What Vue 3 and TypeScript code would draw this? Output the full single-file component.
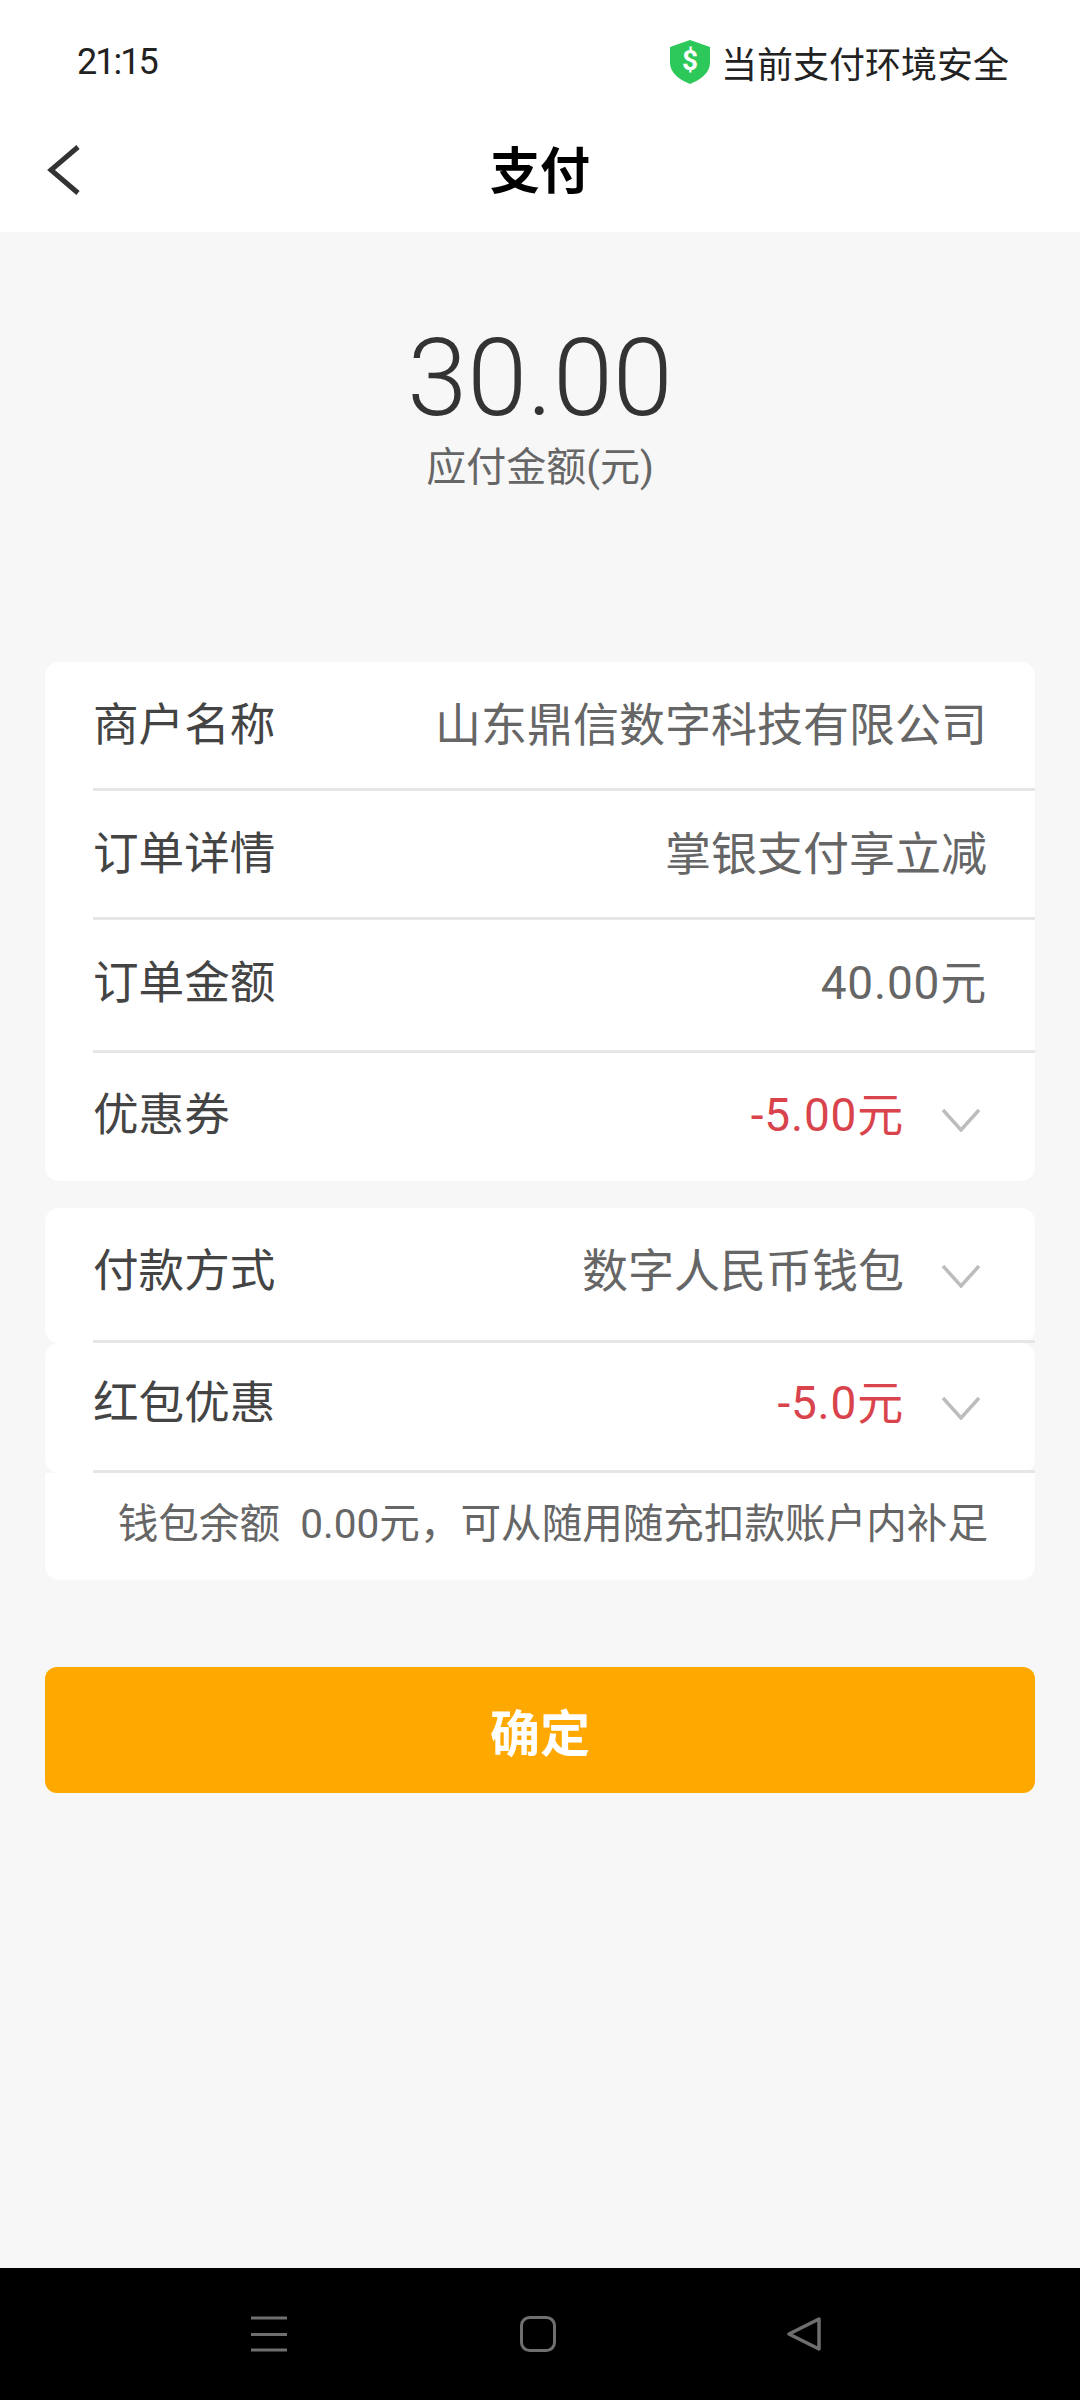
<template>
  <div class="page">
    <header class="top">
      <div class="status-bar">
        <span class="time">21:15</span>
        <div class="safe">
          <svg class="shield" viewBox="0 0 40 44">
            <path d="M20 0 L40 7 V23 C40 33 30 40 20 44 C10 40 0 33 0 23 V7 Z" fill="#2dc85a" />
            <text x="20" y="30" text-anchor="middle" class="shield-mark">$</text>
          </svg>
          <span>当前支付环境安全</span>
        </div>
      </div>
      <div class="title-bar">
        <svg class="back" viewBox="0 0 34 50">
          <path d="M31 2 L4 25 L31 48" fill="none" stroke="#333" stroke-width="5" />
        </svg>
        <span class="title">支付</span>
      </div>
    </header>

    <main class="content">
      <section class="amount">
        <div class="amount-num">30.00</div>
        <div class="amount-label">应付金额(元)</div>
      </section>

      <section class="card">
        <div v-for="row in orderRows" :key="row.label" class="row order-row" :class="{ last: row.last }">
          <span class="row-label">{{ row.label }}</span>
          <span class="row-value" :class="{ red: row.red, num: row.num }">{{ row.value }}</span>
          <svg v-if="row.arrow" class="arrow" viewBox="0 0 40 24">
            <path d="M2 2 L20 22 L38 2" fill="none" stroke="#bdbdbd" stroke-width="3.500" />
          </svg>
        </div>
      </section>

      <section class="pay-group">
        <div class="pay-block">
          <div class="row pay-row">
            <span class="row-label">付款方式</span>
            <span class="row-value">数字人民币钱包</span>
            <svg class="arrow" viewBox="0 0 40 24">
              <path d="M2 2 L20 22 L38 2" fill="none" stroke="#bdbdbd" stroke-width="3.500" />
            </svg>
          </div>
        </div>
        <div class="pay-block">
          <div class="row pay-row second">
            <span class="row-label">红包优惠</span>
            <span class="row-value red num">-5.0元</span>
            <svg class="arrow" viewBox="0 0 40 24">
              <path d="M2 2 L20 22 L38 2" fill="none" stroke="#bdbdbd" stroke-width="3.500" />
            </svg>
          </div>
        </div>
        <div class="note">钱包余额&nbsp;&nbsp;0.00元，可从随用随充扣款账户内补足</div>
      </section>

      <button class="confirm">确定</button>
    </main>

    <footer class="nav-bar">
      <svg class="nav-icon" viewBox="0 0 36 36">
        <path d="M0 2 H36 M0 18.500 H36 M0 34 H36" stroke="#6f6f6f" stroke-width="3" />
      </svg>
      <svg class="nav-icon" viewBox="0 0 36 36">
        <rect x="1.500" y="1.500" width="33" height="33" rx="8" fill="none" stroke="#6f6f6f" stroke-width="3" />
      </svg>
      <svg class="nav-icon" viewBox="0 0 36 36">
        <path d="M32 3 V33 L2 18 Z" fill="none" stroke="#6f6f6f" stroke-width="3.500" stroke-linejoin="round" />
      </svg>
    </footer>
  </div>
</template>

<script setup lang="ts">
interface OrderRow {
  label: string
  value: string
  red?: boolean
  num?: boolean
  arrow?: boolean
  last?: boolean
}

const orderRows: OrderRow[] = [
  { label: '商户名称', value: '山东鼎信数字科技有限公司' },
  { label: '订单详情', value: '掌银支付享立减' },
  { label: '订单金额', value: '40.00元', num: true },
  { label: '优惠券', value: '-5.00元', red: true, num: true, arrow: true, last: true }
]
</script>

<style>
html,
body {
  margin: 0;
  background: #f7f7f7;
}
</style>

<style scoped>
.page {
  width: 1080px;
  height: 2400px;
  display: flex;
  flex-direction: column;
  background: #f7f7f7;
  font-family: Roboto, "Noto Sans CJK SC", sans-serif;
  overflow: hidden;
}

.top {
  background: #fff;
}

.status-bar {
  height: 124px;
  box-sizing: border-box;
  padding: 0 71px 0 77px;
  display: flex;
  align-items: center;
  justify-content: space-between;
  font-size: 36px;
  color: #222;
}

.time {
  letter-spacing: -2px;
}

.safe {
  display: flex;
  align-items: center;
  gap: 11px;
}

.shield {
  width: 40px;
  height: 44px;
}

.shield-mark {
  font-size: 28px;
  font-weight: 700;
  fill: #fff;
}

.title-bar {
  position: relative;
  height: 108px;
  box-sizing: border-box;
  padding-bottom: 22px;
  display: flex;
  align-items: center;
  justify-content: center;
}

.back {
  position: absolute;
  left: 47px;
  top: 21px;
  width: 34px;
  height: 50px;
}

.title {
  font-size: 50px;
  font-weight: 700;
  color: #000;
}

.content {
  flex: 1;
  padding: 0 45px;
}

.amount {
  height: 430px;
  display: flex;
  flex-direction: column;
  align-items: center;
  padding-top: 91px;
  box-sizing: border-box;
}

.amount-num {
  font-size: 108px;
  font-weight: 300;
  line-height: 110px;
  color: #333;
}

.amount-label {
  margin-top: 8px;
  font-size: 40px;
  line-height: 54px;
  color: #666;
}

.card {
  background: #fff;
  border-radius: 14px;
  padding-left: 48px;
}

.row {
  box-sizing: border-box;
  padding-right: 48px;
  display: flex;
  align-items: center;
  border-bottom: 3px solid #e6e6e6;
}

.order-row {
  height: 129px;
  padding-bottom: 9px;
}

.order-row:nth-child(3) {
  height: 133px;
  padding-bottom: 13px;
}

.order-row.last {
  height: 128px;
  padding-bottom: 13px;
  border-bottom: none;
}

.row-label {
  flex: 1;
  font-size: 45.600px;
  color: #444;
}

.row-value {
  font-size: 46px;
  color: #666;
}

.row-value.num {
  letter-spacing: 0.800px;
}

.row-value.red {
  color: #d9434c;
}

.arrow {
  width: 40px;
  height: 24px;
  margin-left: 37px;
  margin-right: 6px;
  margin-top: 18px;
}

.pay-group {
  margin-top: 27px;
}

.pay-block {
  background: #fff;
  border-radius: 14px;
  padding-left: 48px;
}

.pay-row {
  height: 135px;
  padding-bottom: 14px;
}

.pay-row.second {
  height: 130px;
  padding-bottom: 16px;
}

.note {
  height: 107px;
  box-sizing: border-box;
  background: #fff;
  border-radius: 0 0 14px 14px;
  padding-right: 47px;
  padding-bottom: 12px;
  display: flex;
  align-items: center;
  justify-content: flex-end;
  font-size: 40.600px;
  color: #666;
}

.confirm {
  display: block;
  width: 100%;
  height: 126px;
  margin-top: 87px;
  padding: 0;
  border: none;
  border-radius: 12px;
  background: #ffa800;
  color: #fff;
  font-family: inherit;
  font-size: 50px;
  font-weight: 700;
}

.nav-bar {
  height: 132px;
  box-sizing: border-box;
  padding-right: 8px;
  background: #000;
  display: grid;
  grid-template-columns: 270px 268px 266px;
  justify-content: center;
  align-items: center;
  justify-items: center;
}

.nav-icon {
  width: 36px;
  height: 36px;
}
</style>
